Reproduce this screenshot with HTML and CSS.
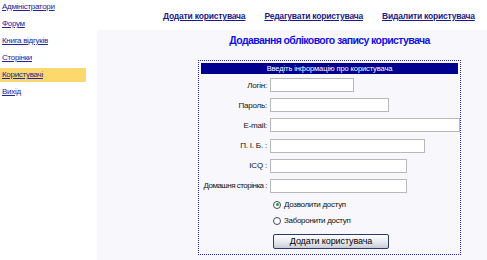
FILE: index.html
```html
<!DOCTYPE html>
<html lang="uk">
<head>
    <meta charset="UTF-8">
    <title>Додавання облікового запису користувача</title>
    <link rel="stylesheet" href="styles.css">
</head>
<body>
    <div class="page">
        <div class="sidebar">
            <a href="#" class="side-link">Адміністратори</a>
            <a href="#" class="side-link">Форум</a>
            <a href="#" class="side-link">Книга відгуків</a>
            <a href="#" class="side-link">Сторінки</a>
            <a href="#" class="side-link active">Користувачі</a>
            <a href="#" class="side-link">Вихід</a>
        </div>
        <div class="main">
            <div class="topbar">
                <a href="#" class="top-link">Додати користувача</a>
                <a href="#" class="top-link">Редагувати користувача</a>
                <a href="#" class="top-link">Видалити користувача</a>
            </div>
            <div class="content">
                <div class="form-wrap">
                    <h1>Додавання облікового запису користувача</h1>
                    <div class="form-box">
                        <div class="form-header">Введіть інформацію про користувача</div>
                        <div class="form-grid">
                            <label>Логін:</label><input type="text" class="w-login">
                            <label>Пароль:</label><input type="password" class="w-pass">
                            <label>E-mail:</label><input type="text" class="w-mail">
                            <label>П. І. Б. :</label><input type="text" class="w-name">
                            <label>ICQ :</label><input type="text" class="w-icq">
                            <label class="long">Домашня сторінка :</label><input type="text" class="w-home">
                        </div>
                        <div class="options">
                            <label class="opt"><input type="radio" name="access" checked> Дозволити доступ</label>
                            <label class="opt"><input type="radio" name="access"> Заборонити доступ</label>
                            <button class="button" type="submit">Додати користувача</button>
                        </div>
                    </div>
                </div>
            </div>
        </div>
    </div>
</body>
</html>
```

FILE: styles.css
```css
* { padding: 0; margin: 0; box-sizing: border-box; }
body {
    font-family: "Liberation Sans", Arial, sans-serif;
    font-size: 8px;
    color: #111;
    background: #fff;
}
.page { display: flex; width: 487px; height: 260px; }
.sidebar { width: 97px; flex-shrink: 0; display: flex; flex-direction: column; gap: 3px; }
.side-link {
    display: block;
    width: 86px;
    height: 14px;
    line-height: 14px;
    padding-left: 2px;
    color: #23239a;
    font-size: 8px;
    letter-spacing: -0.3px;
}
.side-link.active { background-color: #fdd86c; }
.main { flex: 1; min-width: 0; display: flex; flex-direction: column; }
.topbar {
    height: 30px;
    display: flex;
    align-items: center;
    gap: 19px;
    padding-left: 66px;
    padding-top: 2px;
    white-space: nowrap;
}
.top-link { color: #1a1a8c; font-weight: bold; font-size: 8.5px; letter-spacing: -0.2px; }
.content { flex: 1; background-color: #f8f8fc; padding-left: 101px; }
.form-wrap { width: 263px; }
h1 {
    font-size: 10.5px;
    letter-spacing: -0.6px;
    color: #1010e0;
    text-align: center;
    height: 30px;
    line-height: 20px;
    white-space: nowrap;
}
.form-box {
    border: 1px dotted #2a2ab0;
    padding: 2px 2px 6px;
    height: 195px;
}
.form-header {
    background-color: #000090;
    color: #fff;
    text-align: center;
    height: 11px;
    line-height: 11px;
    font-size: 7.5px;
    letter-spacing: -0.1px;
}
.form-grid {
    display: grid;
    grid-template-columns: 66px auto;
    column-gap: 3px;
    row-gap: 6.2px;
    align-items: center;
    justify-items: start;
    margin-top: 4px;
    letter-spacing: -0.2px;
}
.form-grid label { justify-self: end; white-space: nowrap; }
.form-grid label.long { letter-spacing: -0.5px; }
.form-grid input {
    height: 14px;
    border: 1px solid #b8b8b8;
    background: #fff;
}
.w-login { width: 84px; }
.w-pass { width: 119px; }
.w-mail { width: 190px; }
.w-name { width: 155px; }
.w-icq, .w-home { width: 137px; }
.options { padding-left: 72px; margin-top: 4px; }
.opt { display: flex; align-items: center; gap: 3px; height: 16px; letter-spacing: -0.3px; }
.opt input {
    appearance: none;
    width: 8px;
    height: 8px;
    border: 1px solid #3a4a6a;
    border-radius: 50%;
    background: #fff;
    display: grid;
    place-items: center;
}
.opt input:checked::after {
    content: "";
    width: 3px;
    height: 3px;
    border-radius: 50%;
    background: #2aa02a;
}
.button {
    margin-top: 5px;
    width: 116px;
    height: 15px;
    font-family: inherit;
    font-size: 9px;
    letter-spacing: -0.1px;
    color: #000;
    border: 1px solid #2a3a6a;
    border-radius: 2px;
    background: linear-gradient(#ffffff, #e4e6ee 60%, #c8cad8);
}
```
